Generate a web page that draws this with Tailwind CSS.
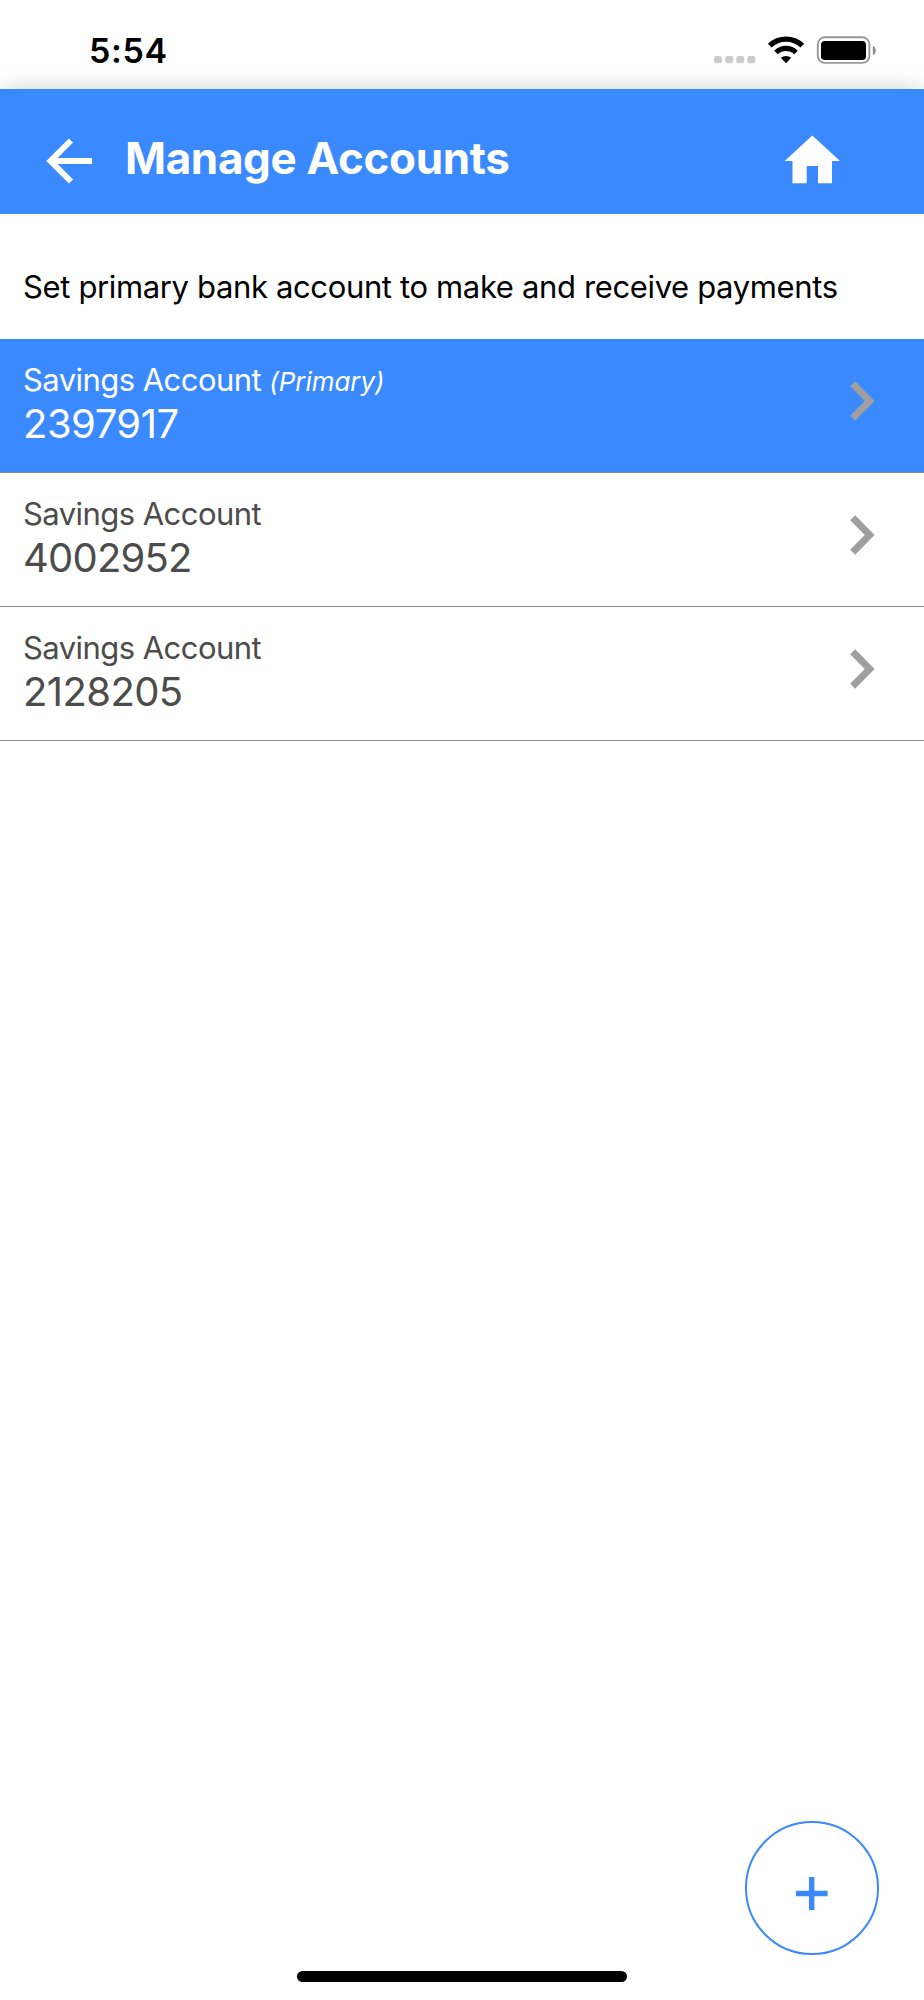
<!DOCTYPE html>
<html lang="en">
<head>
    <meta charset="UTF-8">
    <meta name="viewport" content="width=device-width, initial-scale=1.0">
    <script src="https://cdn.jsdelivr.net/npm/@tailwindcss/browser@4"></script>
    <title>Manage Accounts</title>
</head>
<body class="bg-white">
    <div class="flex h-[2000px] w-[924px] flex-col overflow-hidden bg-white font-['Inter',sans-serif]">
        <!-- status bar -->
        <div class="flex h-[89px] shrink-0 items-center justify-between pt-3 pr-[48px] pl-[89px]">
            <span class="text-[34px] leading-none font-semibold tracking-[0.6px] text-black">5:54</span>
            <div class="flex items-center pb-[2px]">
                <svg class="h-[28px] w-[162px]" viewBox="714 36 162 28" fill="none">
                    <g fill="#cacaca">
                        <rect x="714" y="56" width="8" height="7.3" rx="2.4" />
                        <rect x="725.2" y="56" width="8" height="7.3" rx="2.4" />
                        <rect x="736.2" y="56" width="8" height="7.3" rx="2.4" />
                        <rect x="747.4" y="56" width="8" height="7.3" rx="2.4" />
                    </g>
                    <path d="M769.800 45.600a23.5 23.5 0 0 1 32.400 0" stroke="#000" stroke-width="5.4" />
                    <path d="M776 52.500a14.4 14.4 0 0 1 20 0" stroke="#000" stroke-width="5.2" />
                    <path d="M780.8 57.8a8 8 0 0 1 10.4 0L786 63.2z" fill="#000" />
                    <rect x="817.8" y="37.3" width="51.6" height="25.6" rx="7" stroke="#999" stroke-width="1.9" />
                    <rect x="821" y="41" width="45" height="19" rx="3.8" fill="#000" />
                    <path d="M872.8 46c4 1.6 4 7.400 0 9z" fill="#8c8c8c" />
                </svg>
            </div>
        </div>

        <!-- header -->
        <div class="flex h-[125px] shrink-0 items-center bg-[#3a89ff] pt-[13px] pr-[84px] pl-[46px] shadow-[0_0_22px_-2px_rgba(0,0,0,0.22)]">
            <svg class="mt-[6px] h-[46px] w-[48px]" viewBox="46 138 48 46" fill="none" stroke="#fff" stroke-width="6">
                <path d="M92 161H51" />
                <path d="M71 140.500L50.500 161L71 181.500" />
            </svg>
            <h1 class="ml-[31px] text-[44px] leading-none font-bold tracking-[-0.35px] text-white">Manage Accounts</h1>
            <svg class="mt-[2px] ml-auto h-[50px] w-[56px]" viewBox="784 134 56 50" fill="#fff">
                <path d="M812.3 135.500L840 161H832V183.200H818V166H806.700V183.200H792.500V161H784.700z" />
            </svg>
        </div>

        <div class="relative flex-1 bg-white">
            <p class="flex h-[125px] items-center pt-[21px] pl-[23px] text-[31px] tracking-[-0.36px] whitespace-nowrap text-black">Set primary bank account to make and receive payments</p>

            <!-- accounts -->
            <div class="flex h-[134px] justify-between border-b border-[#8c8c8c] bg-[#3a89ff] pt-[19px] pr-[48px] pl-[23px] text-white">
                <div>
                    <p class="h-[44px] text-[31px] leading-[44px] tracking-[-0.55px]">Savings Account <i class="text-[26px] leading-none tracking-[-0.05px]">(Primary)</i></p>
                    <p class="text-[40px] leading-[44px] tracking-[-0.5px]">2397917</p>
                </div>
                <svg class="mt-[22px] h-[42px] w-[28px]" viewBox="0 0 28 42" fill="none" stroke="#9f9f9f" stroke-width="7">
                    <path d="M4.700 3.700L21.700 21L4.700 38.300" />
                </svg>
            </div>
            <div class="flex h-[134px] justify-between border-b border-[#8c8c8c] pt-[19px] pr-[48px] pl-[23px] text-[#4c4c4c]">
                <div>
                    <p class="h-[44px] text-[31px] leading-[44px] tracking-[-0.55px]">Savings Account</p>
                    <p class="text-[40px] leading-[44px] tracking-[-0.8px]">4002952</p>
                </div>
                <svg class="mt-[22px] h-[42px] w-[28px]" viewBox="0 0 28 42" fill="none" stroke="#9f9f9f" stroke-width="7">
                    <path d="M4.700 3.700L21.700 21L4.700 38.300" />
                </svg>
            </div>
            <div class="flex h-[134px] justify-between border-b border-[#8c8c8c] pt-[19px] pr-[48px] pl-[23px] text-[#4c4c4c]">
                <div>
                    <p class="h-[44px] text-[31px] leading-[44px] tracking-[-0.55px]">Savings Account</p>
                    <p class="text-[40px] leading-[44px] tracking-[-0.6px]">2128205</p>
                </div>
                <svg class="mt-[22px] h-[42px] w-[28px]" viewBox="0 0 28 42" fill="none" stroke="#9f9f9f" stroke-width="7">
                    <path d="M4.700 3.700L21.700 21L4.700 38.300" />
                </svg>
            </div>

            <!-- add button -->
            <button class="absolute right-[45px] bottom-[45px] flex h-[134px] w-[134px] items-center justify-center rounded-full border-2 border-[#3a89ff] pt-[11px]">
                <svg class="h-[33px] w-[32px]" viewBox="0 0 32 33" fill="none" stroke="#3a89ff" stroke-width="5.4">
                    <path d="M0 16.500H31.600M15.700 0V33" />
                </svg>
            </button>
            <!-- home indicator -->
            <div class="absolute bottom-[18px] left-[297px] h-[11px] w-[330px] rounded-full bg-black"></div>
        </div>
    </div>
</body>
</html>
